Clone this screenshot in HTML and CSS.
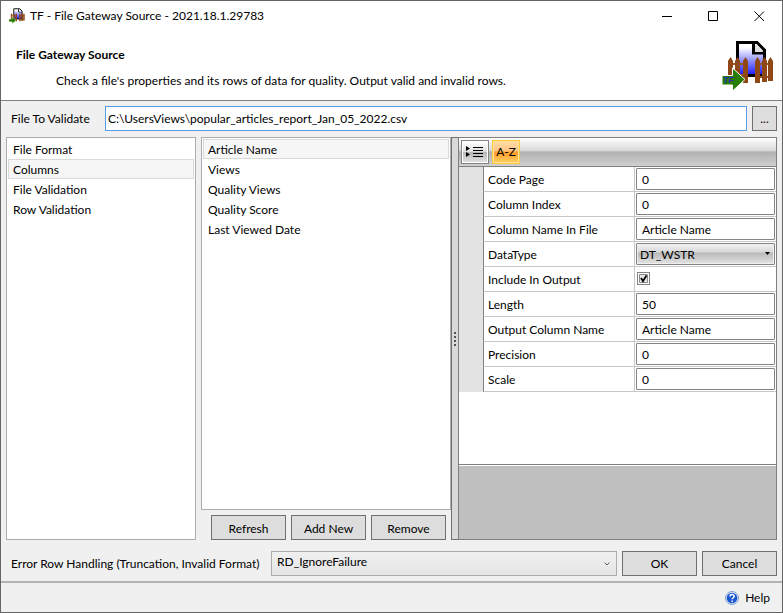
FILE: index.html
```
<!DOCTYPE html>
<html lang="en">
<head>
	<meta charset="UTF-8">
	<title>TF - File Gateway Source</title>
	<link rel="stylesheet" href="styles.css">
</head>
<body>
	<div class="window">
		<div class="titlebar">
			<svg class="app-icon" viewBox="0 0 52 52" aria-hidden="true"><use href="#gateway"/></svg>
			<span class="caption">TF - File Gateway Source - 2021.18.1.29783</span>
			<button class="win-btn" aria-label="Minimize"><svg width="11" height="11"><path d="M0 5.500H10"/></svg></button>
			<button class="win-btn" aria-label="Maximize"><svg width="11" height="11"><path d="M.5 .5H9.500V9.500H.5Z"/></svg></button>
			<button class="win-btn" aria-label="Close"><svg width="11" height="11"><path d="M.5 .5L10 10M10 .5L.5 10"/></svg></button>
		</div>

		<div class="header">
			<div>
				<h1>File Gateway Source</h1>
				<p>Check a file's properties and its rows of data for quality. Output valid and invalid rows.</p>
			</div>
			<svg class="logo" viewBox="0 0 52 52">
				<linearGradient id="page" x1="0" y1="0" x2="0" y2="1">
					<stop offset="0.15" stop-color="#fff"/>
					<stop offset="1" stop-color="#1414ff"/>
				</linearGradient>
				<g id="gateway">
					<path d="M15.500 2.500H35L42.500 10V35.500H15.500Z" fill="url(#page)" stroke="#000" stroke-width="3"/>
					<path d="M31.500 3V13H42" fill="#fff" stroke="#000" stroke-width="3"/>
					<path d="M33 4L41 12H33Z" fill="#ddd"/>
					<path d="M7 24H26M7 35H26M34 24H50M34 37H50" stroke="#9b5523" stroke-width="2"/>
					<path d="M6 42V21L8.500 17L11 21V42ZM13 42V21L15.500 17L18 21V42ZM21 43V21L23.500 17L26 21V43ZM33 43V21L35.500 17L38 21V43ZM40 42V21L42.500 17L45 21V42ZM46 41V21L48.500 17L51 21V41Z" fill="#8f4716"/>
					<path d="M0 35.500H10.500V28L23 39.500L10.500 51V45H0Z" fill="#267d00" stroke="#fff" stroke-width="1"/>
				</g>
				<text class="tf" x="1" y="43">TF</text>
			</svg>
		</div>

		<div class="content">
			<div class="file-row">
				<label for="file">File To Validate</label>
				<input id="file" type="text" value="C:\UsersViews\popular_articles_report_Jan_05_2022.csv">
				<button class="btn browse">...</button>
			</div>

			<div class="panels">
				<nav class="list">
					<a href="#">File Format</a>
					<a href="#" class="on">Columns</a>
					<a href="#">File Validation</a>
					<a href="#">Row Validation</a>
				</nav>

				<div class="columns">
					<div class="list">
						<a href="#" class="on">Article Name</a>
						<a href="#">Views</a>
						<a href="#">Quality Views</a>
						<a href="#">Quality Score</a>
						<a href="#">Last Viewed Date</a>
					</div>
					<div class="actions">
						<button class="btn">Refresh</button>
						<button class="btn">Add New</button>
						<button class="btn">Remove</button>
					</div>
				</div>

				<div class="splitter"><i></i><i></i><i></i><i></i></div>

				<div class="props">
					<div class="toolbar">
						<button class="tool" aria-label="Categorized">
							<svg width="20" height="12"><path d="M1 0L5 2.500L1 5ZM1 6L5 8.500L1 11Z"/><path d="M8 1H18V2H8ZM8 4H18V5H8ZM8 7H18V8H8ZM8 10H18V11H8Z"/></svg>
						</button>
						<button class="tool active">A-Z</button>
					</div>
					<div class="grid">
						<div class="row"><label for="p1">Code Page</label><div class="cell"><input id="p1" type="text" value="0"></div></div>
						<div class="row"><label for="p2">Column Index</label><div class="cell"><input id="p2" type="text" value="0"></div></div>
						<div class="row"><label for="p3">Column Name In File</label><div class="cell"><input id="p3" type="text" value="Article Name"></div></div>
						<div class="row"><label for="p4">DataType</label><div class="cell"><select id="p4"><option>DT_WSTR</option></select></div></div>
						<div class="row"><label for="p5">Include In Output</label><div class="cell"><input id="p5" type="checkbox" checked></div></div>
						<div class="row"><label for="p6">Length</label><div class="cell"><input id="p6" type="text" value="50"></div></div>
						<div class="row"><label for="p7">Output Column Name</label><div class="cell"><input id="p7" type="text" value="Article Name"></div></div>
						<div class="row"><label for="p8">Precision</label><div class="cell"><input id="p8" type="text" value="0"></div></div>
						<div class="row"><label for="p9">Scale</label><div class="cell"><input id="p9" type="text" value="0"></div></div>
					</div>
					<div class="description"></div>
				</div>
			</div>

			<div class="error-row">
				<label for="error">Error Row Handling (Truncation, Invalid Format)</label>
				<select id="error"><option>RD_IgnoreFailure</option></select>
				<button class="btn">OK</button>
				<button class="btn">Cancel</button>
			</div>
		</div>

		<div class="footer">
			<a href="#">
				<svg width="14" height="14" viewBox="0 0 14 14">
					<circle cx="7" cy="7" r="6.500" fill="#e4ecf8" stroke="#7f9cc9"/>
					<circle cx="7" cy="7" r="5.300" fill="#1b57d0"/>
					<path d="M5 5.500C5 3 9.200 3 9.200 5.300C9.200 6.800 7.200 6.700 7.200 8.300M7.200 9.500V11" fill="none" stroke="#fff" stroke-width="1.500"/>
				</svg>
				Help
			</a>
		</div>
	</div>
</body>
</html>
```

FILE: styles.css
```
*{
	margin: 0;
	padding: 0;
	box-sizing: border-box;
}
body, button, input, select{
	font: 12px/16px Lato, "Open Sans", sans-serif;
	color: #000;
}
a{
	color: #000;
	text-decoration: none;
}
.window{
	display: flex;
	flex-direction: column;
	min-height: 100vh;
	border: 1px solid #666;
	background: #f0f0f0;
}

/* title bar */
.titlebar{
	display: flex;
	align-items: center;
	height: 30px;
	padding-left: 8px;
	background: #fff;
}
.app-icon{
	width: 16px;
	height: 16px;
}
.caption{
	flex: 1;
	margin-left: 5px;
}
.win-btn{
	width: 46px;
	height: 30px;
	border: 0;
	background: #fff;
}
.win-btn svg{
	display: block;
	margin: 0 auto;
	fill: none;
	stroke: #000;
}

/* header */
.header{
	display: flex;
	justify-content: space-between;
	height: 70px;
	padding: 9px 8px 0 15px;
	border-bottom: 1px solid #808080;
	background: #fff;
}
.header h1{
	margin-top: 7px;
	font-size: 12px;
	line-height: 16px;
}
.header p{
	margin: 10px 0 0 40px;
}
.logo{
	width: 52px;
	height: 52px;
}
.tf{
	font: italic bold 9px "Liberation Sans", sans-serif;
	fill: #3030b0;
}

.content{
	display: flex;
	flex: 1;
	flex-direction: column;
	padding: 5px;
}
.btn{
	width: 75px;
	height: 25px;
	border: 1px solid #707070;
	background: #ddd;
}
.file-row{
	display: flex;
	align-items: center;
}
.file-row label{
	width: 99px;
	padding-left: 5px;
}
.file-row input{
	flex: 1;
	height: 25px;
	padding: 0 2px;
	border: 1px solid #569de5;
}
.file-row .browse{
	width: 25px;
	margin-left: 5px;
}

/* panels */
.panels{
	display: grid;
	flex: 1;
	grid-template-columns: 190px 255px 7px 1fr;
	margin-top: 6px;
}
.list{
	padding: 1px;
	border: 1px solid #abadb3;
	background: #fff;
}
.list a{
	display: block;
	height: 20px;
	padding: 2px 4px 0;
	border: 1px solid transparent;
}
.list .on{
	border-color: #dadada;
	background: #f6f6f6;
}
.columns{
	display: flex;
	flex-direction: column;
	margin-left: 5px;
}
.columns .list{
	flex: 1;
}
.actions{
	display: flex;
	justify-content: flex-end;
	gap: 5px;
	padding: 5px 5px 0;
}
.actions .btn{
	padding-top: 3px;
}
.splitter{
	display: flex;
	flex-direction: column;
	align-items: center;
	justify-content: center;
	gap: 2px;
	border: 1px solid #707070;
	border-right: 0;
	background: #d9d9d9;
}
.splitter i{
	width: 2px;
	height: 2px;
	background: #555;
}

/* property grid */
.props{
	display: flex;
	flex-direction: column;
	border: 1px solid #808080;
	background: #fff;
}
.toolbar{
	display: flex;
	gap: 3px;
	height: 29px;
	padding: 2px;
	border-bottom: 1px solid #808080;
	background: linear-gradient(#fff, #d8d8d8 45%, #b0b0b0 50%, #d0d0d0);
}
.tool{
	width: 28px;
	height: 24px;
	border: 1px solid #848484;
	background: linear-gradient(#fff, #ddd 50%, #b6b6b6 50%, #e4e4e4);
	box-shadow: inset 0 0 0 1px #fff;
}
.tool svg{
	display: block;
	margin: 0 auto;
}
.active{
	border-color: #ffc83c;
	background: linear-gradient(#ffdcab, #ffc581 45%, #ff9b29 50%, #ffd063);
	box-shadow: inset 0 0 0 1px #ffe39a;
}
.grid{
	flex: 1;
}
.row{
	display: flex;
	height: 25px;
	border-left: 24px solid #e3e3e3;
}
.row label{
	width: 152px;
	padding: 5px 4px 0;
	border: solid #c8c8c8;
	border-width: 0 1px 1px 0;
	border-left: 1px solid #808080;
}
.cell{
	flex: 1;
	padding: 1px;
	border-bottom: 1px solid #c8c8c8;
}
.cell input[type="text"], .cell select{
	display: block;
	width: 100%;
	height: 22px;
	padding: 0 5px;
	border: 1px solid #848484;
	border-radius: 1px;
	background: #fff;
}
.cell select{
	padding: 1px 3px 0;
	appearance: none;
	background: url("data:image/svg+xml,%3Csvg xmlns='http://www.w3.org/2000/svg' width='5' height='3'%3E%3Cpath d='M0 0H5L2.500 3Z'/%3E%3C/svg%3E") no-repeat right 4px top 8px, linear-gradient(#f2f2f2, #d8d8d8 40%, #b9b9b9 45%, #e4e4e4);
	box-shadow: inset 0 0 0 1px #eee;
}
.cell input[type="checkbox"]{
	display: block;
	width: 13px;
	height: 13px;
	margin: 4px 1px;
	appearance: none;
	border: 1px solid #848484;
	background: url("data:image/svg+xml,%3Csvg xmlns='http://www.w3.org/2000/svg' width='11' height='11'%3E%3Cpath d='M1.500 1.500H9.500V9.500H1.500Z' fill='%23e8e8e8' stroke='%23888'/%3E%3Cpath d='M3 5L5 8L8.500 2.500' fill='none' stroke='%23000' stroke-width='1.800'/%3E%3C/svg%3E");
}
.description{
	height: 75px;
	border-top: 1px solid #808080;
	background: #bfbfbf;
	box-shadow: inset 0 1px 0 #fff;
}

/* bottom */
.error-row{
	display: flex;
	gap: 5px;
	margin-top: 11px;
}
.error-row label{
	width: 260px;
	padding: 5px 0 0 5px;
	white-space: nowrap;
}
.error-row select{
	flex: 1;
	height: 25px;
	padding: 0 5px 3px;
	appearance: none;
	border: 1px solid #acacac;
	background: url("data:image/svg+xml,%3Csvg xmlns='http://www.w3.org/2000/svg' width='6' height='4'%3E%3Cpath d='M.5 .5L3 3L5.500 .5' fill='none' stroke='%23606060'/%3E%3C/svg%3E") no-repeat right 6px center, linear-gradient(#f0f0f0, #e5e5e5);
}
.footer{
	display: flex;
	justify-content: flex-end;
	height: 31px;
	padding: 6px 12px 0;
	border-top: 2px solid #b4b4b4;
}
.footer a{
	display: flex;
	align-items: center;
	gap: 6px;
	height: 18px;
}
```
